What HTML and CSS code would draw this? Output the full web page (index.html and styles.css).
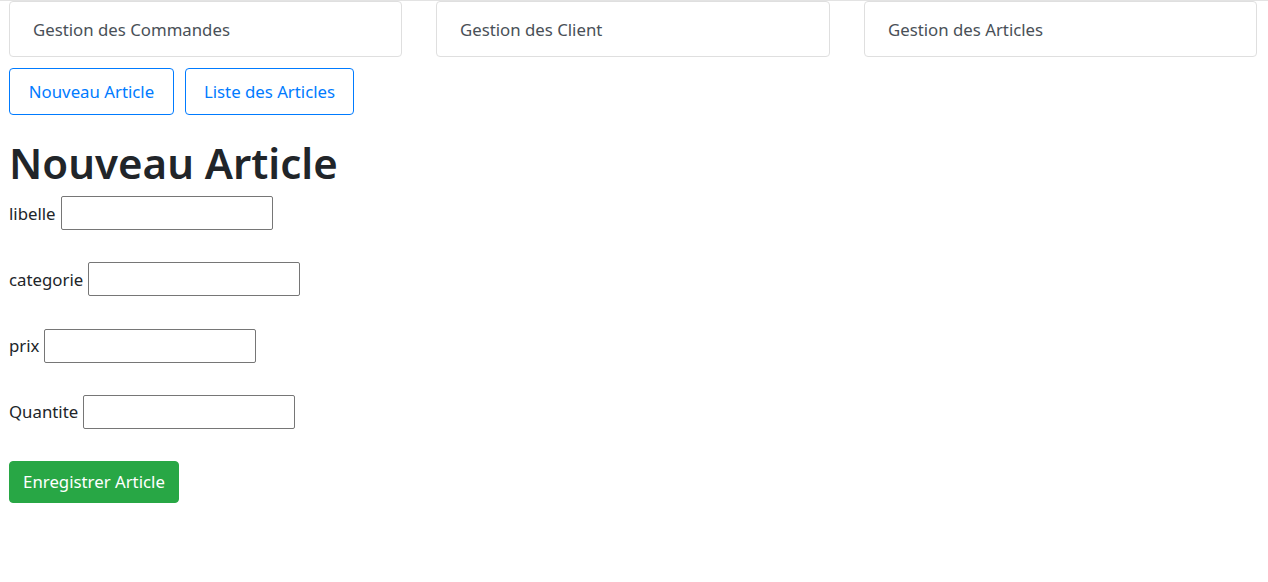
FILE: index.html
```html
<!DOCTYPE html>
<html lang="fr">
<head>
<meta charset="utf-8">
<title>Nouveau Article</title>
<link rel="stylesheet" href="styles.css">
</head>
<body>
<header class="topnav">
  <div class="navcard">Gestion des Commandes</div>
  <div class="navcard">Gestion des Client</div>
  <div class="navcard">Gestion des Articles</div>
</header>
<div class="actions">
  <a class="btn-outline b1">Nouveau Article</a>
  <a class="btn-outline b2">Liste des Articles</a>
</div>
<h1 class="title">Nouveau Article</h1>
<form class="form">
  <div class="row"><label>libelle</label><input type="text"></div>
  <div class="row"><label>categorie</label><input type="text"></div>
  <div class="row"><label>prix</label><input type="text"></div>
  <div class="row"><label>Quantite</label><input type="text"></div>
  <button type="button" class="btn-success">Enregistrer Article</button>
</form>
</body>
</html>
```
FILE: styles.css
```css
html, body {
  margin: 0;
  padding: 0;
  background: #fff;
}
body {
  font-family: "Segoe UI", "Noto Sans", "Open Sans", sans-serif;
  font-size: 16.8px;
  color: #212529;
  border-top: 1px solid #e3e3e3;
}
.topnav {
  display: grid;
  grid-template-columns: 393px 394px 393px;
  column-gap: 34px;
  padding-left: 9px;
}
.navcard {
  box-sizing: border-box;
  height: 56px;
  border: 1px solid #dfdfdf;
  border-radius: 4px;
  padding-left: 23px;
  display: flex;
  align-items: center;
  color: #495057;
}
.actions {
  display: flex;
  gap: 11px;
  padding-left: 9px;
  margin-top: 11px;
}
.btn-outline {
  box-sizing: border-box;
  height: 47px;
  border: 1px solid #007bff;
  border-radius: 4px;
  color: #007bff;
  display: flex;
  align-items: center;
  justify-content: center;
}
.b1 { width: 165px; }
.b2 { width: 169px; }
.title {
  margin: 24px 0 9px 9px;
  font-size: 42px;
  line-height: 48px;
  font-weight: 600;
  color: #212529;
}
.form {
  display: flex;
  flex-direction: column;
  align-items: flex-start;
  gap: 32.33px;
  padding-left: 9px;
}
.row {
  display: flex;
  align-items: center;
  height: 34px;
}
.row label {
  margin-right: 5px;
}
.row input {
  box-sizing: border-box;
  width: 212px;
  height: 34px;
  border: 1px solid #767676;
  border-radius: 2px;
  margin: 0;
  padding: 1px 2px;
  font: inherit;
}
.btn-success {
  box-sizing: border-box;
  width: 170px;
  height: 42px;
  margin-top: -0.33px;
  border: 1px solid #28a745;
  border-radius: 4px;
  background: #28a745;
  color: #fff;
  font: inherit;
  padding: 0;
}
```
